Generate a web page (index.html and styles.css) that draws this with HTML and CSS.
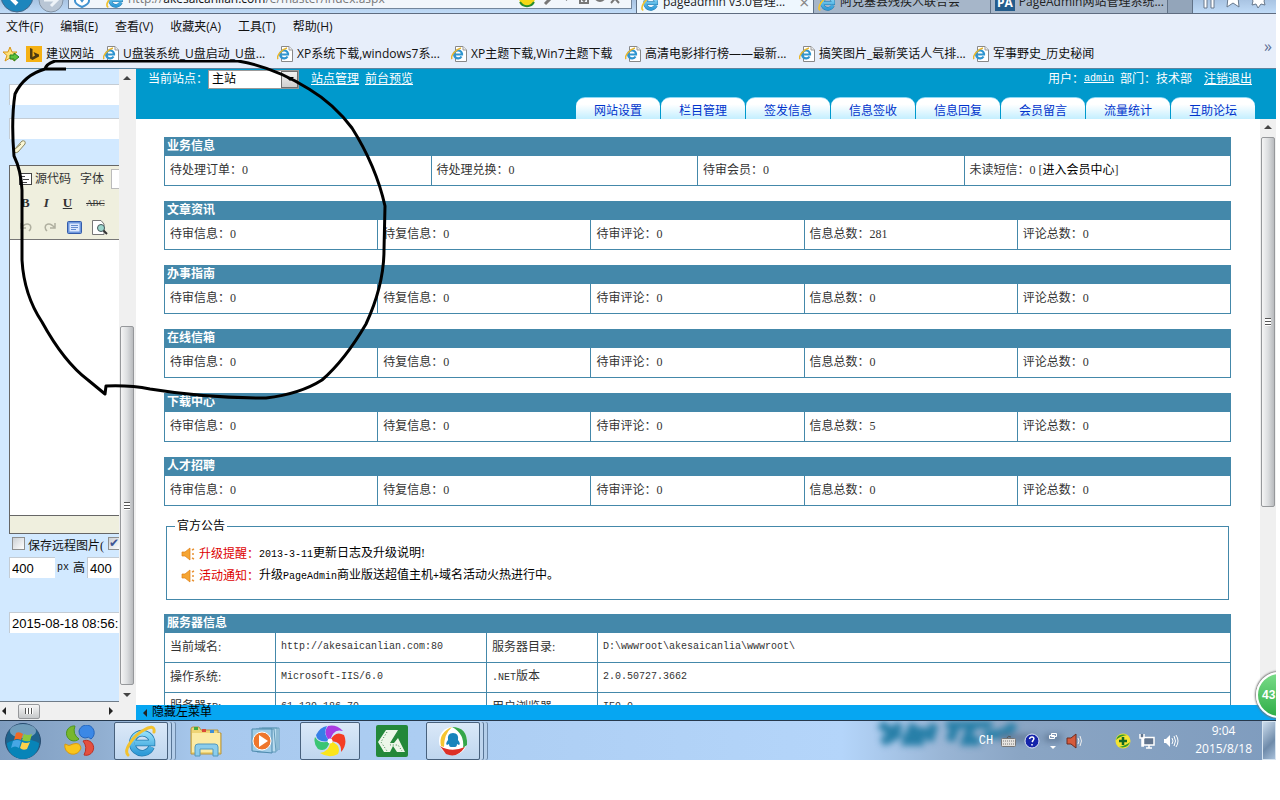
FILE: index.html
```
<!DOCTYPE html>
<html lang="zh-CN">
<head>
    <meta charset="UTF-8">
    <meta name="viewport" content="width=device-width, initial-scale=1.0">
    <title>pageadmin v3.0管理系统</title>
    <link rel="stylesheet" href="styles.css">
</head>
<body>
    <svg class="symbols" aria-hidden="true">
        <defs>
            <linearGradient id="ie-blue" x1="0" y1="0" x2="0" y2="1">
                <stop offset="0" stop-color="#8fdcf8"/>
                <stop offset="1" stop-color="#2f9bd8"/>
            </linearGradient>
            <symbol id="ie" viewBox="0 0 32 32">
                <path d="M26.500 22 A10 10 0 1 1 27 16 V18 H10" fill="none" stroke="#2479ad" stroke-width="6.500"/>
                <path d="M26.500 22 A10 10 0 1 1 27 16 V18 H10" fill="none" stroke="url(#ie-blue)" stroke-width="5"/>
                <path d="M3 30 C-2 25 9 10 19 5 C25 1 30 1 29 7" fill="none" stroke="#f2c22f" stroke-width="3" stroke-linecap="round"/>
            </symbol>
            <symbol id="page-ie" viewBox="0 0 16 16">
                <path d="M4.500 .5 H12 L15.500 4 V15.500 H4.500 Z" fill="#fff" stroke="#888"/>
                <path d="M12 .5 V4 H15.500" fill="#eee" stroke="#999"/>
                <path d="M10.500 10.500 A4 4 0 1 1 11 7.500 V8.500 H4.500" fill="none" stroke="#2f95d0" stroke-width="2.200"/>
                <path d="M1 13 C-1 10 5 3 10 2" fill="none" stroke="#e8b62c" stroke-width="1.500"/>
            </symbol>
            <symbol id="horn" viewBox="0 0 14 14">
                <path d="M1 5 H4 L9 1 V13 L4 9 H1 Z" fill="#f5a534" stroke="#e07f16" stroke-width=".7"/>
                <path d="M11 3 L13 2 M11 7 H13 M11 11 L13 12" stroke="#e99335" stroke-width="1.500"/>
            </symbol>
        </defs>
    </svg>

    <div class="screen">
        <header class="address-row">
            <button class="nav-button" aria-label="后退">
                <svg width="34" height="34" viewBox="0 0 34 34"><circle cx="17" cy="17" r="16" fill="#1d86bd" stroke="#44678a"/><path d="M25 17 H10 M17 9 L9 17 L17 25" fill="none" stroke="#fff" stroke-width="4"/></svg>
            </button>
            <button class="nav-button" aria-label="前进">
                <svg width="26" height="26" viewBox="0 0 26 26"><circle cx="13" cy="13" r="12" fill="#b9c6d5" stroke="#8293a6"/><path d="M6 13 H19 M13 7 L19 13 L13 19" fill="none" stroke="#eef3f8" stroke-width="3"/></svg>
            </button>
            <div class="address">
                <svg width="16" height="18" viewBox="0 0 16 18"><path d="M1 1 H15 V11 Q15 14 8 17 Q1 14 1 11 Z" fill="#fff" stroke="#4192d0" stroke-width="2"/><path d="M5 7 L8 11 L11 7" fill="none" stroke="#4192d0" stroke-width="2"/></svg>
                <svg class="address-ie" width="18" height="18"><use href="#ie"/></svg>
                <span class="url">http://<b>akesaicanlian.com</b>/e/master/index.aspx</span>
                <svg width="110" height="16" viewBox="0 0 110 16"><circle cx="10" cy="6" r="8" fill="#f4d816"/><path d="M3 10 A8 8 0 0 0 17 10" fill="none" stroke="#278d2d" stroke-width="2"/><path d="M28 12 L35 5" stroke="#777" stroke-width="3"/><circle cx="37" cy="3" r="4" fill="none" stroke="#777" stroke-width="2"/><path d="M47 6 H52 L49.500 9 Z" fill="#777"/><path d="M63 2 H71 V11 H63 Z M65 7 L67 9 L70 4 M78 4 A5 5 0 1 0 88 4 M94 11 L102 2 M94 2 L102 11" fill="none" stroke="#777" stroke-width="2"/></svg>
            </div>
            <div class="browser-tab active"><svg width="18" height="18"><use href="#ie"/></svg><span>pageadmin v3.0管理...</span><i>×</i></div>
            <div class="browser-tab"><svg width="18" height="18"><use href="#ie"/></svg><span>阿克塞县残疾人联合会</span></div>
            <div class="browser-tab"><b class="pa">PA</b><span>PageAdmin网站管理系统...</span></div>
            <div class="browser-new"></div>
            <svg class="window-tools" width="80" height="16" viewBox="0 0 80 16"><path d="M8 0 V11 H11 V0 M15 0 V11 H18 V0" fill="#fff" stroke="#68798d"/><path d="M32 0 L31 10 L37 6 L43 10 L42 0" fill="#fff" stroke="#68798d"/><path d="M55 0 L57 4 L56 8 L60 7 L62 11 L65 7 L69 8 L68 4 L70 0" fill="#fff" stroke="#68798d"/></svg>
        </header>

        <nav class="menu">
            <a href="#">文件(F)</a>
            <a href="#">编辑(E)</a>
            <a href="#">查看(V)</a>
            <a href="#">收藏夹(A)</a>
            <a href="#">工具(T)</a>
            <a href="#">帮助(H)</a>
        </nav>

        <nav class="favorites">
            <svg width="18" height="16" viewBox="0 0 18 16"><path d="M8 1 L10 6 L15 6 L11 9.500 L13 15 L8 12 L3 15 L5 9.500 L1 6 L6 6 Z" fill="#ffe27a" stroke="#d79518"/><path d="M8 9 H12 V7 L17 11 L12 15 V13 H8 Z" fill="#5cc23c" stroke="#258524"/></svg>
            <a class="bing" href="#"><svg width="16" height="16" viewBox="0 0 16 16"><rect width="16" height="16" fill="#f5b114"/><path d="M4 2 L6.500 3 V11 L9 9.500 L7.500 6 L13 8.500 V10.500 L6.500 14 L4 12.500 Z" fill="#4d3a12"/></svg>建议网站</a>
            <a class="fav" href="#"><svg width="16" height="16"><use href="#page-ie"/></svg>U盘装系统_U盘启动_U盘...</a>
            <a class="fav" href="#"><svg width="16" height="16"><use href="#page-ie"/></svg>XP系统下载,windows7系...</a>
            <a class="fav" href="#"><svg width="16" height="16"><use href="#page-ie"/></svg>XP主题下载,Win7主题下载</a>
            <a class="fav" href="#"><svg width="16" height="16"><use href="#page-ie"/></svg>高清电影排行榜——最新...</a>
            <a class="fav" href="#"><svg width="16" height="16"><use href="#page-ie"/></svg>搞笑图片_最新笑话人气排...</a>
            <a class="fav" href="#"><svg width="16" height="16"><use href="#page-ie"/></svg>军事野史_历史秘闻</a>
            <span class="more">»</span>
        </nav>

        <main class="content">
            <aside class="side">
                <div class="side-body">
                    <form class="editor-form">
                        <input class="field" type="text" aria-label="标题">
                        <input class="field" type="text" aria-label="副标题">
                        <svg class="clip" width="18" height="16" viewBox="0 0 18 16"><path d="M3 11 L11 2 Q15 1 14 5 L7 13 Q3 15 3 11 L10 5" fill="#fbf7d5" stroke="#8b8760"/></svg>
                        <div class="editor">
                            <div class="toolbar">
                                <div class="tool-row">
                                    <svg width="13" height="12" viewBox="0 0 13 12"><rect x=".5" y=".5" width="12" height="11" fill="#fff" stroke="#444"/><path d="M2 3.500 H6 M4 6.500 H10 M2 9.500 H8" stroke="#444"/></svg>
                                    <span>源代码</span><span class="font-label">字体</span><span class="font-box"></span>
                                </div>
                                <div class="tool-row letters">
                                    <b>B</b><b><i>I</i></b><b><u>U</u></b><s>ABC</s>
                                    <svg width="10" height="12" viewBox="0 0 10 12"><path d="M0 1.500 H10 M0 4.500 H10 M0 7.500 H10 M0 10.500 H10" stroke="#444"/></svg>
                                </div>
                                <div class="tool-row icons">
                                    <svg width="14" height="12" viewBox="0 0 14 12"><path d="M2 2 V7 H7 M2 7 Q7 1 11 4 Q13 7 10 10" fill="none" stroke="#b0b0a0" stroke-width="1.500"/></svg>
                                    <svg width="14" height="12" viewBox="0 0 14 12"><path d="M12 2 V7 H7 M12 7 Q7 1 3 4 Q1 7 4 10" fill="none" stroke="#b0b0a0" stroke-width="1.500"/></svg>
                                    <svg width="15" height="13" viewBox="0 0 15 13"><rect x=".5" y=".5" width="14" height="12" rx="1" fill="#6d97dd" stroke="#345caa"/><rect x="2.500" y="2.500" width="10" height="8" fill="#dce9ff"/><path d="M4 4.500 H11 M4 6.500 H11 M4 8.500 H9" stroke="#648cce"/></svg>
                                    <svg width="16" height="15" viewBox="0 0 16 15"><path d="M.5 .5 H9 L12 4 V14.500 H.5 Z" fill="#fff" stroke="#777"/><circle cx="9" cy="8" r="3.500" fill="#9bd6cc" stroke="#46585b"/><path d="M11.500 10.500 L15 14" stroke="#333" stroke-width="2"/></svg>
                                </div>
                            </div>
                            <textarea aria-label="内容"></textarea>
                            <div class="editor-foot"></div>
                        </div>
                        <div class="options">
                            <input type="checkbox" id="save-remote"><label for="save-remote">保存远程图片(</label><input type="checkbox" aria-label="缩略图" checked>
                        </div>
                        <div class="sizes">
                            <input type="text" id="pic-width" value="400"><label class="mono" for="pic-width">px</label><label for="pic-height">高</label><input type="text" id="pic-height" value="400">
                        </div>
                        <input class="field date" type="text" aria-label="日期" value="2015-08-18 08:56:12">
                    </form>
                    <div class="hscroll"><i class="arrow left"></i><div class="hthumb"></div><i class="arrow right"></i></div>
                </div>
                <div class="vscroll"><i class="arrow up"></i><div class="vthumb low"></div><i class="arrow down"></i></div>
            </aside>

            <section class="admin">
                <header class="admin-head">
                    <div class="site">
                        <label for="site">当前站点：</label>
                        <span class="select-box"><select id="site"><option>主站</option></select><span class="drop"><i class="arrow down"></i></span></span>
                        <a href="#">站点管理</a>
                        <a href="#">前台预览</a>
                    </div>
                    <div class="user">
                        <span>用户：</span><a class="mono" href="#">admin</a><span class="dept">部门：技术部</span><a href="#">注销退出</a>
                    </div>
                    <nav class="tabs">
                        <a href="#">网站设置</a>
                        <a href="#">栏目管理</a>
                        <a href="#">签发信息</a>
                        <a href="#">信息签收</a>
                        <a href="#">信息回复</a>
                        <a href="#">会员留言</a>
                        <a href="#">流量统计</a>
                        <a href="#">互助论坛</a>
                    </nav>
                </header>
                <div class="admin-body">
                    <div class="panels">
                        <h3>业务信息</h3>
                        <table>
                            <tr><td>待处理订单：0</td><td>待处理兑换：0</td><td>待审会员：0</td><td>未读短信：0 [<a href="#">进入会员中心</a>]</td></tr>
                        </table>
                        <h3>文章资讯</h3>
                        <table>
                            <tr><td>待审信息：0</td><td>待复信息：0</td><td>待审评论：0</td><td>信息总数：281</td><td>评论总数：0</td></tr>
                        </table>
                        <h3>办事指南</h3>
                        <table>
                            <tr><td>待审信息：0</td><td>待复信息：0</td><td>待审评论：0</td><td>信息总数：0</td><td>评论总数：0</td></tr>
                        </table>
                        <h3>在线信箱</h3>
                        <table>
                            <tr><td>待审信息：0</td><td>待复信息：0</td><td>待审评论：0</td><td>信息总数：0</td><td>评论总数：0</td></tr>
                        </table>
                        <h3>下载中心</h3>
                        <table>
                            <tr><td>待审信息：0</td><td>待复信息：0</td><td>待审评论：0</td><td>信息总数：5</td><td>评论总数：0</td></tr>
                        </table>
                        <h3>人才招聘</h3>
                        <table>
                            <tr><td>待审信息：0</td><td>待复信息：0</td><td>待审评论：0</td><td>信息总数：0</td><td>评论总数：0</td></tr>
                        </table>
                        <fieldset>
                            <legend>官方公告</legend>
                            <p><svg width="14" height="14"><use href="#horn"/></svg><em>升级提醒：</em><a href="#"><span class="mono">2013-3-11</span>更新日志及升级说明!</a></p>
                            <p><svg width="14" height="14"><use href="#horn"/></svg><em>活动通知：</em><a href="#">升级<span class="mono">PageAdmin</span>商业版送超值主机<span class="mono">+</span>域名活动火热进行中。</a></p>
                        </fieldset>
                        <h3>服务器信息</h3>
                        <table class="server">
                            <colgroup><col class="key"><col class="value"><col class="key"><col></colgroup>
                            <tr><td>当前域名:</td><td class="mono">http://akesaicanlian.com:80</td><td>服务器目录:</td><td class="mono">D:\wwwroot\akesaicanlia\wwwroot\</td></tr>
                            <tr><td>操作系统:</td><td class="mono">Microsoft-IIS/6.0</td><td><span class="mono">.NET</span>版本</td><td class="mono">2.0.50727.3662</td></tr>
                            <tr><td>服务器<span class="mono">IP</span>:</td><td class="mono">61.139.186.70</td><td>用户浏览器:</td><td class="mono">IE9.0</td></tr>
                        </table>
                    </div>
                    <div class="vscroll wide"><i class="arrow up"></i><div class="vthumb"></div></div>
                </div>
                <footer class="admin-foot"><a href="#"><i class="arrow left"></i>隐藏左菜单</a></footer>
            </section>
        </main>

        <footer class="taskbar">
            <svg class="smudge" width="190" height="40" viewBox="0 0 190 40"><path d="M8 3 L24 14 L10 21 M28 3 L16 20 M42 3 L35 20 H52 M42 11 H55 M62 3 L57 20 M74 3 H120 M84 4 L78 20 M100 4 L94 20 H108 M112 14 Q135 15 142 3" fill="none" stroke="#277fa8" stroke-width="9"/><path d="M128 17 H165 M172 17 H225" stroke="#667f9d" stroke-width="8"/></svg>
            <button class="start" aria-label="开始">
                <svg width="38" height="38" viewBox="0 0 38 38"><circle cx="19" cy="19" r="17.500" fill="#1d638d" stroke="#284c70"/><path d="M3 21 Q19 13 35 21 A16 16 0 0 1 3 21" fill="#0784b8"/><ellipse cx="19" cy="9" rx="13" ry="7" fill="#a8c5db" opacity=".6"/><path d="M12 11 Q15 9 19 12 L17 18 Q13 16 10 18 Z" fill="#f06a24"/><path d="M20 12 Q24 14 28 12 L26 19 Q22 20 18 18 Z" fill="#8bc83e"/><path d="M9 19 Q13 17 17 19 L15 26 Q11 23 7 26 Z" fill="#46a6e5"/><path d="M18 20 Q22 22 26 20 L23 27 Q19 29 16 26 Z" fill="#fcd24a"/></svg>
            </button>
            <button class="launch" aria-label="软件管家">
                <svg width="32" height="32" viewBox="0 0 32 32"><path d="M11 1 A7.500 7.500 0 1 0 15 14 Q8 9 11 1" fill="#78b72d" stroke="#4b951e"/><path d="M15 6 A7.700 7.700 0 1 1 27 14 Q25 11 21 13 Q15 12 15 6" fill="#3b88e6" stroke="#2465bb"/><path d="M1 19 Q5 22 9 19 Q16 17 17 23 A7.700 7.700 0 1 1 1 19" fill="#fac51c" stroke="#d99a11"/><path d="M19 16 A7.500 7.500 0 1 1 20 30 Q24 22 19 16" fill="#e44f3f" stroke="#b93228"/></svg>
            </button>
            <button class="task stacked" aria-label="Internet Explorer"><svg width="32" height="32"><use href="#ie"/></svg></button>
            <button class="launch" aria-label="资源管理器">
                <svg width="34" height="32" viewBox="0 0 34 32"><path d="M2 4 Q2 2 4 2 H10 L12 5 H29 V8 H32 V29 H2 Z" fill="#efd475" stroke="#b6943e"/><path d="M5 2 H9 V5 H5 Z" fill="#40aa3f"/><path d="M13 4 H17 V7 H13 Z" fill="#db4939"/><path d="M21 5 H25 V8 H21 Z" fill="#3f90d5"/><path d="M3 8 H31 V27 H3 Z" fill="#fbeba5"/><path d="M6 31 V22 Q6 19 9 19 H26 Q29 19 29 22 V31 H24 V24 H11 V31 Z" fill="#8bcdec" stroke="#5298be"/></svg>
            </button>
            <button class="launch" aria-label="媒体播放器">
                <svg width="30" height="28" viewBox="0 0 30 28"><path d="M5 2 H23 L25 25 H6 Z M8 1 H26 V24 M11 1 H28 V23" fill="#b8dbef" stroke="#639bba"/><path d="M1 2 H21 V26 L1 24 Z" fill="#9fcce7" stroke="#4d89ad"/><circle cx="11" cy="14" r="9" fill="#ee762c" stroke="#fff"/><path d="M8 8 L17 14 L8 20 Z" fill="#fff"/></svg>
            </button>
            <button class="task" aria-label="浏览器">
                <svg width="32" height="32" viewBox="0 0 32 32"><path d="M16 16 Q8 8 14 1 Q22 -1 29 6 Q18 3 16 16" fill="#a93be1"/><path d="M16 16 Q21 5 30 10 Q34 19 27 27 Q28 16 16 16" fill="#f43d24"/><path d="M16 16 Q28 20 24 29 Q15 34 6 28 Q17 26 16 16" fill="#fbe51b"/><path d="M16 16 Q13 28 4 24 Q-1 18 1 12 Q7 21 16 16" fill="#3bc573"/><path d="M16 16 Q3 18 2 10 Q6 2 13 1 Q8 10 16 16" fill="#377fe7"/><path d="M16 16 Q11 8 15 2 L25 4 Q18 7 16 16" fill="#a93be1"/><path d="M16 16 Q23 7 30 12 L29 22 Q24 15 16 16" fill="#f43d24"/><path d="M16 16 Q24 22 22 29 L11 29 Q18 24 16 16" fill="#fbe51b"/><path d="M16 16 Q10 25 4 23 L2 15 Q9 19 16 16" fill="#3bc573"/><path d="M16 16 Q5 16 3 10 L10 3 Q9 11 16 16" fill="#377fe7"/><circle cx="16" cy="16" r="2.500" fill="#fff"/></svg>
            </button>
            <button class="launch" aria-label="影音">
                <svg width="32" height="32" viewBox="0 0 32 32"><rect width="32" height="32" rx="2" fill="#23883a"/><path d="M10 5 H22 L14 18 H18 L22 13 L29 27 H21 L17 21 L14 27 H8 L2 17 Z" fill="#edf7e9"/><path d="M11 7 L5 17 L11 26 M22 7 L14 20 H22 L26 26" fill="none" stroke="#398348" stroke-dasharray="1 2"/></svg>
            </button>
            <button class="task stacked" aria-label="QQ">
                <svg width="32" height="32" viewBox="0 0 32 32"><circle cx="16" cy="16" r="14" fill="#fff"/><path d="M4 21 Q1 8 15 2 Q7 9 7 22 Z" fill="#f5c531"/><path d="M15 2 Q31 2 30 20 L26 23 Q28 9 15 2" fill="#35a64a"/><path d="M3 21 Q14 28 28 22 Q20 34 9 29 Z" fill="#dd3027"/><path d="M16 8 Q10 8 11 15 Q8 19 10 20 L12 19 Q12 22 14 22 H18 Q20 22 20 19 L22 20 Q24 19 21 15 Q22 8 16 8" fill="#1784bc"/></svg>
            </button>
            <div class="tray">
                <span class="lang">CH</span>
                <svg width="15" height="12" viewBox="0 0 15 12"><path d="M6 3 Q7 0 10 2" fill="none" stroke="#555"/><rect x=".5" y="3.500" width="14" height="8" rx="1" fill="#e6e3df" stroke="#777"/><path d="M2 6 H13 M2 9 H13" stroke="#777" stroke-dasharray="1 1"/></svg>
                <svg width="16" height="16" viewBox="0 0 16 16"><circle cx="8" cy="8" r="7" fill="#1424aa" stroke="#dce4f7"/><path d="M5.500 6 Q6 3.500 8.500 4 Q11 5 9 7.500 L8 9 M8 11 V12.500" fill="none" stroke="#fff" stroke-width="1.500"/></svg>
                <svg width="10" height="18" viewBox="0 0 10 18"><path d="M3.500 1.500 H8.500 V4.500 H3.500 Z M1.500 3.500 H6.500 V6.500 H1.500 Z" fill="#8198b8" stroke="#fff"/><path d="M2 14 H8 L5 17 Z" fill="#fff"/></svg>
                <svg width="17" height="16" viewBox="0 0 17 16"><path d="M1 5 H5 L10 1 V15 L5 11 H1 Z" fill="#d65b3d" stroke="#6e2c20"/><path d="M12 5 Q14 8 12 11 M14 3 Q17 8 14 13" fill="none" stroke="#eee"/></svg>
                <svg class="guard" width="16" height="16" viewBox="0 0 16 16"><circle cx="8" cy="8" r="7.500" fill="#f5e431"/><path d="M1 7 Q3 0 12 2 Q5 3 1 7 M15 9 Q13 16 4 14 Q12 12 15 9" fill="#369a2b"/><path d="M8 4 V12 M4 8 H12" stroke="#126823" stroke-width="2.500"/></svg>
                <svg width="16" height="16" viewBox="0 0 16 16"><path d="M4.500 4.500 H15 V12 H4.500 Z M7 15 H13 M10 12 V15 M1 1 V5 H5 V1 M3 5 V13 H5" fill="#62758e" stroke="#fff" stroke-width="1.500"/></svg>
                <svg width="16" height="14" viewBox="0 0 16 14"><path d="M1 5 H3 L7 1 V13 L3 9 H1 Z" fill="#fff"/><path d="M9 4 Q11 7 9 10 M11 2 Q14 7 11 12 M13 1 Q17 7 13 13" fill="none" stroke="#fff"/></svg>
                <div class="clock"><span>9:04</span><span>2015/8/18</span></div>
                <button class="show-desktop" aria-label="显示桌面"></button>
            </div>
        </footer>
        <div class="score"><span>43</span></div>
        <svg class="marker" width="400" height="350" viewBox="0 0 400 350"><path d="M66 9 L45 9 Q24 15 15 34 Q11 60 14 96 Q21 110 22 130 V200 Q24 235 42 262 Q64 302 88 320 L105 334 L106 326 Q130 325 150 329 Q205 338 266 338 Q300 334 322 320 Q345 300 366 264 Q384 225 384 190 L385 146 Q376 106 352 68 Q334 44 309 29 Q274 7 238 1 L55 1 Q46 4 45 9" fill="none" stroke="#000" stroke-width="3" stroke-linejoin="round"/></svg>
    </div>
</body>
</html>
```
FILE: styles.css
```
* {
    box-sizing: border-box;
}
body {
    margin: 0;
    background: #fff;
    font-family: "Liberation Serif", "Noto Sans CJK SC", sans-serif;
    font-size: 12px;
    line-height: 18px;
    color: #333;
}
svg {
    flex: none;
}
button {
    padding: 0;
    border: 0;
    background: none;
}
input, select, textarea {
    margin: 0;
    border-radius: 0;
}
.symbols {
    position: absolute;
    width: 0;
    height: 0;
}
.mono {
    font-family: "Liberation Mono", "Noto Sans CJK SC", monospace;
    font-size: 10px;
}
.screen {
    position: relative;
    display: flex;
    flex-direction: column;
    height: calc(100vh - 40px);
    margin-right: 4px;
    overflow: hidden;
}

/* browser chrome */
.address-row {
    display: flex;
    align-items: flex-end;
    height: 14px;
    overflow: hidden;
    background: linear-gradient(#a9c4e3, #c0dbf7);
    border-bottom: 1px solid #5f6c80;
    font-family: "Open Sans", "Noto Sans CJK SC", sans-serif;
    color: #222;
}
.nav-button {
    display: flex;
    margin-right: 4px;
}
.address {
    display: flex;
    flex: 0 0 564px;
    align-items: flex-end;
    height: 28px;
    margin: 0 4px 4px 0;
    padding: 0 4px 0 5px;
    background: #f2f6fb;
    border: 1px solid #74869b;
}
.address-ie {
    margin: 0 4px 0 16px;
}
.url {
    flex: 1;
    color: #777;
}
.url b {
    font-weight: normal;
    color: #111;
}
.browser-tab {
    display: flex;
    flex: 0 0 177px;
    align-items: flex-end;
    gap: 4px;
    height: 30px;
    padding: 0 4px 2px;
    overflow: hidden;
    background: #a6b6c9;
    border-left: 1px solid #617287;
    white-space: nowrap;
}
.browser-tab.active {
    background: #eef7fe;
}
.browser-tab i {
    margin-left: auto;
    font-size: 18px;
    color: #888;
}
.pa {
    padding: 0 2px;
    background: #245c8c;
    color: #fff;
    line-height: 16px;
}
.browser-new {
    width: 26px;
    height: 30px;
    background: #93a5ba;
    border: solid #617287;
    border-width: 0 1px;
}
.window-tools {
    margin-left: auto;
}
.menu, .favorites {
    display: flex;
    align-items: center;
    background: #e7eefa;
    font-family: "Open Sans", "Noto Sans CJK SC", sans-serif;
    white-space: nowrap;
}
.menu a, .favorites a {
    color: #111;
    text-decoration: none;
}
.menu {
    height: 26px;
    padding-left: 6px;
    gap: 17px;
}
.favorites {
    height: 29px;
    padding: 0 4px 0 2px;
    border-bottom: 1px solid #5d84a0;
}
.bing, .fav {
    display: flex;
    align-items: center;
    gap: 4px;
}
.bing {
    width: 77px;
    margin-left: 6px;
}
.fav {
    flex: 0 1 174px;
}
.more {
    margin: 0 0 16px auto;
    font-size: 16px;
    color: #5c6f96;
}

.content {
    display: flex;
    flex: 1;
    min-height: 0;
}

/* left frame */
.side {
    display: flex;
    width: 136px;
}
.side-body {
    display: flex;
    flex: 1;
    flex-direction: column;
    min-width: 0;
    overflow: hidden;
}
.editor-form {
    display: flex;
    flex: 1;
    flex-direction: column;
    align-items: flex-start;
    min-height: 0;
    padding: 15px 0 0 9px;
    overflow: hidden;
    background: #d2e9ff;
    border-bottom: 1px solid #6e7b88;
}
.editor-form input[type="text"] {
    flex: none;
    height: 21px;
    padding: 0 2px;
    background: #fff;
    border: solid #c4ccd4;
    border-width: 1px 0 0 1px;
    font-family: "Liberation Sans", sans-serif;
    font-size: 13px;
}
.editor-form .field {
    width: 160px;
    margin-bottom: 13px;
}
.clip {
    margin: -13px 0 10px 2px;
}
.editor {
    width: 160px;
    border: 1px solid #666;
}
.toolbar {
    height: 74px;
    padding-top: 1px;
    background: #efefde;
    border-bottom: 1px solid #777;
}
.tool-row {
    display: flex;
    align-items: center;
    height: 24px;
    padding-left: 9px;
    gap: 3px;
}
.font-label {
    margin: 0 4px 0 6px;
}
.font-box {
    width: 40px;
    height: 20px;
    background: #fff;
    border: 1px solid #bbb;
}
.letters {
    padding-left: 11px;
    gap: 14px;
    font-size: 13px;
}
.letters s {
    font-size: 9px;
}
.icons {
    gap: 10px;
}
.editor textarea {
    display: block;
    width: 100%;
    height: 275px;
    border: 0;
    resize: none;
}
.editor-foot {
    height: 18px;
    background: #efefde;
    border-top: 1px solid #666;
}
.options, .sizes {
    display: flex;
    align-items: center;
    white-space: nowrap;
    color: #111;
}
.options {
    height: 23px;
    padding-left: 3px;
}
.options input {
    flex: none;
    width: 13px;
    height: 13px;
    margin: 0 3px 4px 0;
    background: linear-gradient(135deg, #ccd0d4, #fff);
    border: 1px solid #8e8f8f;
    appearance: none;
}
.options label + input {
    margin-left: 4px;
}
.options input:checked::before {
    content: "✔";
    display: block;
    color: #3e5594;
    font-size: 12px;
    line-height: 10px;
}
.sizes {
    margin-bottom: 34px;
    gap: 2px;
}
.sizes input {
    width: 46px;
}
.sizes label + label {
    margin-left: 2px;
}

/* scrollbars */
.vscroll {
    display: flex;
    flex: none;
    flex-direction: column;
    align-items: center;
    width: 17px;
    padding: 7px 2px 23px 1px;
    background: #f0f0f0;
}
.vscroll.wide {
    width: 16px;
    padding: 6px 0 8px;
}
.vthumb {
    display: flex;
    flex: 0 0 370px;
    align-items: center;
    justify-content: center;
    width: 14px;
    margin-top: 8px;
    background: linear-gradient(90deg, #f5f5f5, #dcdee0 50%, #b9bbbe);
    border: 1px solid #96989b;
    border-radius: 2px;
}
.vthumb.low {
    flex-basis: 359px;
    margin: auto 0 8px;
}
.vthumb::before {
    content: "";
    width: 6px;
    height: 8px;
    background: repeating-linear-gradient(#555 0 1px, #fff 1px 3px);
}
.hscroll {
    display: flex;
    align-items: center;
    height: 18px;
    padding: 0 6px 0 2px;
    background: #f0f0f0;
}
.hthumb {
    display: flex;
    align-items: center;
    justify-content: center;
    width: 22px;
    height: 15px;
    margin: 0 auto 0 12px;
    background: linear-gradient(#f6f6f6, #c6c8ca);
    border: 1px solid #96989b;
    border-radius: 2px;
}
.hthumb::before {
    content: "";
    width: 8px;
    height: 6px;
    background: repeating-linear-gradient(90deg, #555 0 1px, #fff 1px 3px);
}
.arrow {
    display: inline-block;
    flex: none;
    border: 4px solid transparent;
}
.arrow.up {
    border-top: 0;
    border-bottom-color: #444;
}
.arrow.down {
    border-bottom: 0;
    border-top-color: #444;
}
.arrow.left {
    border-left: 0;
    border-right-color: #222;
}
.arrow.right {
    border-right: 0;
    border-left-color: #222;
}

/* admin frame */
.admin {
    display: flex;
    flex: 1;
    flex-direction: column;
    min-width: 0;
}
.admin-head {
    display: flex;
    flex-wrap: wrap;
    justify-content: space-between;
    height: 50px;
    background: #0099cc;
    color: #fff;
}
.admin-head a {
    color: #fff;
}
.site, .user {
    display: flex;
    align-items: center;
    height: 20px;
}
.site {
    padding-left: 12px;
}
.site a {
    margin-right: 6px;
}
.user {
    padding-right: 24px;
}
.dept {
    margin: 0 12px 0 6px;
}
.select-box {
    position: relative;
    margin-right: 12px;
}
.select-box select {
    display: block;
    width: 91px;
    height: 19px;
    padding: 0 3px;
    background: #fff;
    border: 1px solid #999;
    color: #000;
    font: inherit;
    line-height: 16px;
    appearance: none;
}
.drop {
    position: absolute;
    top: 1px;
    right: 1px;
    display: flex;
    align-items: center;
    justify-content: center;
    width: 17px;
    height: 17px;
    background: linear-gradient(#f2f2f2, #cfcfcf);
    border: 1px solid #707070;
    pointer-events: none;
}
.drop .arrow {
    border-top-color: #000;
}
.tabs {
    display: flex;
    flex: 0 0 100%;
    align-items: flex-end;
    justify-content: flex-end;
    height: 30px;
    padding-right: 21px;
    gap: 1px;
}
.tabs a {
    width: 84px;
    height: 22px;
    padding-top: 4px;
    background: linear-gradient(#fff 30%, #c4efff);
    border-top: 1px solid #8fd8f5;
    border-radius: 9px 9px 0 0;
    color: #0033cc;
    text-align: center;
    text-decoration: none;
}
.admin-body {
    display: flex;
    flex: 1;
    min-height: 0;
}
.panels {
    flex: 1;
    min-width: 0;
    padding: 18px 29px 0 28px;
    overflow: hidden;
}
h3 {
    margin: 0;
    padding-left: 3px;
    background: #4488aa;
    color: #fff;
    font-size: 12px;
    line-height: 18px;
}
table {
    width: 100%;
    margin-bottom: 15px;
    border-collapse: collapse;
    table-layout: fixed;
}
td {
    height: 30px;
    padding: 0 5px 2px;
    border: 1px solid #4488aa;
    white-space: nowrap;
}
td a, fieldset a {
    color: #000;
    text-decoration: none;
}
.key {
    width: 111px;
}
.value {
    width: 211px;
}
fieldset {
    height: 83px;
    margin: -4px 2px 14px;
    padding: 8px 14px 0;
    border: 1px solid #4488aa;
}
legend {
    margin-left: -6px;
    padding: 0 2px;
    color: #000;
}
fieldset p {
    display: flex;
    align-items: center;
    height: 22px;
    margin: 0;
}
fieldset em {
    margin-left: 4px;
    color: #dd0000;
    font-style: normal;
}
.admin-foot {
    height: 15px;
    padding-left: 7px;
    background: #06a6f2;
    line-height: 15px;
}
.admin-foot a {
    display: flex;
    align-items: center;
    gap: 5px;
    color: #000;
    text-decoration: none;
}

/* taskbar */
.taskbar {
    position: relative;
    display: flex;
    align-items: center;
    height: 40px;
    overflow: hidden;
    background: linear-gradient(90deg, #7f9dc0, #91afd1 8%, #a8c9ee 16%, #b4d5fa 66%, #99b5d5 74%, #8aa5c4 80%, #7f9cbe);
    border-top: 1px solid #26394d;
}
.smudge {
    position: absolute;
    top: 0;
    right: 214px;
    filter: blur(3px);
}
.start {
    width: 46px;
    margin-right: 4px;
}
.launch {
    width: 60px;
}
.start, .launch, .task {
    display: flex;
    flex: none;
    align-items: center;
    justify-content: center;
    height: 38px;
}
.launch + .task {
    margin: 0 2px 0 4px;
}
.task {
    position: relative;
    width: 60px;
    background: linear-gradient(#dae8f8, #bfd6ef);
    border: 1px solid #48617d;
    border-radius: 2px;
}
.launch + .task.stacked {
    width: 54px;
    margin: 0 8px 0 4px;
    box-shadow: 3px 0 0 #bed5ee, 4px 0 0 #587595, 7px 0 0 #b4ceea, 8px 0 0 #6c89aa;
}
.tray {
    display: flex;
    align-items: center;
    height: 100%;
    margin-left: auto;
    gap: 8px;
    color: #fff;
    z-index: 1;
}
.lang {
    font-family: "Liberation Mono", monospace;
}
.tray .guard {
    margin-left: 24px;
}
.clock {
    display: flex;
    flex-direction: column;
    margin: 0 2px 2px 8px;
    text-align: center;
    font-family: "Open Sans", sans-serif;
}
.show-desktop {
    width: 14px;
    height: 39px;
    background: linear-gradient(135deg, #cbdced, #6f8baa 60%, #a7bfd9);
    border: 1px solid #d7e4f0;
}

/* floating items over the desktop */
.score {
    position: absolute;
    right: -26px;
    bottom: 42px;
    width: 46px;
    height: 46px;
    background: linear-gradient(#79db87, #2fae48);
    border: 2px solid #fff;
    border-radius: 50%;
    box-shadow: 0 0 2px 1px #777;
    color: #fff;
    font: bold 12px/42px "Liberation Sans", sans-serif;
}
.score span {
    padding-left: 4px;
}
.marker {
    position: absolute;
    top: 60px;
    left: 0;
    pointer-events: none;
}
```
